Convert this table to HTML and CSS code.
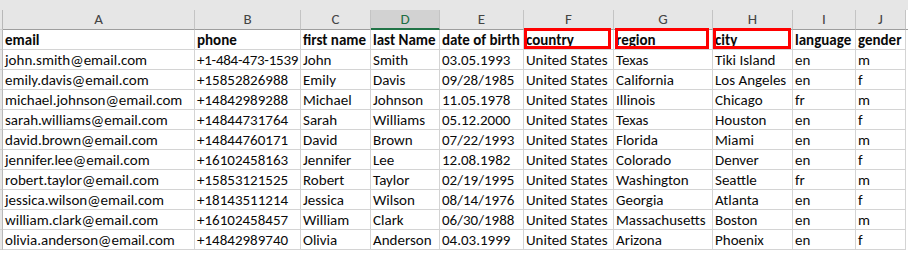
FILE: index.html
```html
<!DOCTYPE html>
<html>
<head>
<meta charset="utf-8">
<link rel="stylesheet" href="styles.css">
</head>
<body>
<div class="sheet">
  <div class="topbar"></div>
  <div class="grid">
    <div class="rh"></div>
    <div class="ch">A</div><div class="ch">B</div><div class="ch">C</div><div class="ch sel">D</div><div class="ch">E</div><div class="ch">F</div><div class="ch">G</div><div class="ch">H</div><div class="ch">I</div><div class="ch">J</div><div class="ch fill"></div>

    <div class="rh"></div>
    <div class="c b">email</div><div class="c b">phone</div><div class="c b">first name</div><div class="c b">last Name</div><div class="c b">date of birth</div><div class="c b mark m-country">country</div><div class="c b mark m-region">region</div><div class="c b mark m-city">city</div><div class="c b">language</div><div class="c b">gender</div><div class="fill"></div>

    <div class="rh"></div>
    <div class="c">john.smith@email.com</div><div class="c tight">+1-484-473-1539</div><div class="c">John</div><div class="c">Smith</div><div class="c">03.05.1993</div><div class="c">United States</div><div class="c">Texas</div><div class="c">Tiki Island</div><div class="c">en</div><div class="c">m</div><div class="fill"></div>

    <div class="rh"></div>
    <div class="c">emily.davis@email.com</div><div class="c">+15852826988</div><div class="c">Emily</div><div class="c">Davis</div><div class="c">09/28/1985</div><div class="c">United States</div><div class="c">California</div><div class="c">Los Angeles</div><div class="c">en</div><div class="c">f</div><div class="fill"></div>

    <div class="rh"></div>
    <div class="c">michael.johnson@email.com</div><div class="c">+14842989288</div><div class="c">Michael</div><div class="c">Johnson</div><div class="c">11.05.1978</div><div class="c">United States</div><div class="c">Illinois</div><div class="c">Chicago</div><div class="c">fr</div><div class="c">m</div><div class="fill"></div>

    <div class="rh"></div>
    <div class="c">sarah.williams@email.com</div><div class="c">+14844731764</div><div class="c">Sarah</div><div class="c">Williams</div><div class="c">05.12.2000</div><div class="c">United States</div><div class="c">Texas</div><div class="c">Houston</div><div class="c">en</div><div class="c">f</div><div class="fill"></div>

    <div class="rh"></div>
    <div class="c">david.brown@email.com</div><div class="c">+14844760171</div><div class="c">David</div><div class="c">Brown</div><div class="c">07/22/1993</div><div class="c">United States</div><div class="c">Florida</div><div class="c">Miami</div><div class="c">en</div><div class="c">m</div><div class="fill"></div>

    <div class="rh"></div>
    <div class="c">jennifer.lee@email.com</div><div class="c">+16102458163</div><div class="c">Jennifer</div><div class="c">Lee</div><div class="c">12.08.1982</div><div class="c">United States</div><div class="c">Colorado</div><div class="c">Denver</div><div class="c">en</div><div class="c">f</div><div class="fill"></div>

    <div class="rh"></div>
    <div class="c">robert.taylor@email.com</div><div class="c">+15853121525</div><div class="c">Robert</div><div class="c">Taylor</div><div class="c">02/19/1995</div><div class="c">United States</div><div class="c">Washington</div><div class="c">Seattle</div><div class="c">fr</div><div class="c">m</div><div class="fill"></div>

    <div class="rh"></div>
    <div class="c">jessica.wilson@email.com</div><div class="c">+18143511214</div><div class="c">Jessica</div><div class="c">Wilson</div><div class="c">08/14/1976</div><div class="c">United States</div><div class="c">Georgia</div><div class="c">Atlanta</div><div class="c">en</div><div class="c">f</div><div class="fill"></div>

    <div class="rh"></div>
    <div class="c">william.clark@email.com</div><div class="c">+16102458457</div><div class="c">William</div><div class="c">Clark</div><div class="c">06/30/1988</div><div class="c">United States</div><div class="c">Massachusetts</div><div class="c">Boston</div><div class="c">en</div><div class="c">m</div><div class="fill"></div>

    <div class="rh"></div>
    <div class="c">olivia.anderson@email.com</div><div class="c">+14842989740</div><div class="c">Olivia</div><div class="c">Anderson</div><div class="c">04.03.1999</div><div class="c">United States</div><div class="c">Arizona</div><div class="c">Phoenix</div><div class="c">en</div><div class="c">f</div><div class="fill"></div>
  </div>
</div>
</body>
</html>
```
FILE: styles.css
```css
html, body {
  margin: 0;
  padding: 0;
  background: #ffffff;
}
body {
  font-family: Carlito, Lato, "Liberation Sans", sans-serif;
  color: #000000;
  overflow: hidden;
}
.topbar {
  height: 10px;
  background: #e6e6e6;
}
.grid {
  display: grid;
  grid-template-columns: 3px 192px 106px 70px 69px 84px 90px 99px 80px 63px 50px 1fr;
  grid-auto-rows: 20px;
}
.grid > div {
  box-sizing: border-box;
}
.rh {
  background: #e6e6e6;
  border-right: 1px solid #b8b8b8;
  border-bottom: 1px solid #d0d0d0;
}
.ch {
  background: #e6e6e6;
  border-right: 1px solid #c4c4c4;
  border-bottom: 1px solid #9e9e9e;
  color: #444444;
  font-size: 15px;
  line-height: 19px;
  text-align: center;
}
.ch.sel {
  background: #d2d2d2;
  color: #1e6e43;
  border-bottom: 2px solid #217346;
}
.ch.fill {
  border-right: none;
}
.c {
  border-right: 1px solid #d4d4d4;
  border-bottom: 1px solid #d4d4d4;
  padding: 0 2px;
  font-size: 15px;
  line-height: 20px;
  color: #0a0a0a;
  white-space: nowrap;
  overflow: hidden;
}
.c.b {
  font-weight: bold;
}
.c.tight {
  letter-spacing: -0.25px;
}
.fill {
  background: #ffffff;
}
.mark {
  position: relative;
  overflow: visible;
}
.mark::after {
  content: "";
  position: absolute;
  top: -2px;
  height: 21px;
  border: 3px solid #ff0000;
  box-sizing: border-box;
}
.m-country::after {
  left: 0;
  width: 87px;
}
.m-region::after {
  left: 1px;
  width: 94px;
}
.m-city::after {
  left: 0;
  width: 78px;
}
```
